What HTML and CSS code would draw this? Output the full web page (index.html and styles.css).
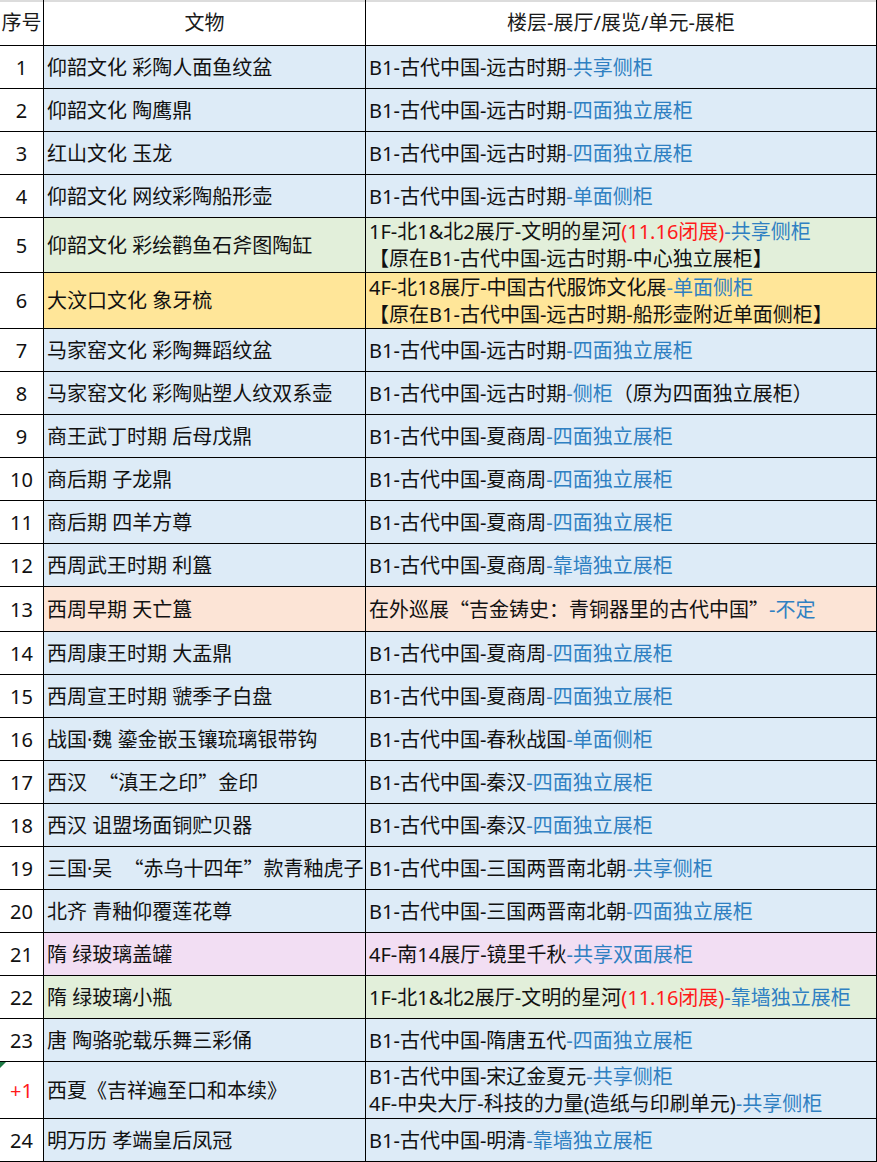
FILE: index.html
```html
<!DOCTYPE html>
<html lang="zh-CN">
<head>
<meta charset="utf-8">
<title>文物位置表</title>
<link rel="stylesheet" href="styles.css">
</head>
<body>
<div class="sheet">
  <div class="row head">
    <div class="c num">序号</div>
    <div class="c mid">文物</div>
    <div class="c mid">楼层-展厅/展览/单元-展柜</div>
  </div>

  <div class="row blue"><div class="c num">1</div><div class="c">仰韶文化 彩陶人面鱼纹盆</div><div class="c">B1-古代中国-远古时期<span class="b">-共享侧柜</span></div></div>
  <div class="row blue"><div class="c num">2</div><div class="c">仰韶文化 陶鹰鼎</div><div class="c">B1-古代中国-远古时期<span class="b">-四面独立展柜</span></div></div>
  <div class="row blue"><div class="c num">3</div><div class="c">红山文化 玉龙</div><div class="c">B1-古代中国-远古时期<span class="b">-四面独立展柜</span></div></div>
  <div class="row blue"><div class="c num">4</div><div class="c">仰韶文化 网纹彩陶船形壶</div><div class="c">B1-古代中国-远古时期<span class="b">-单面侧柜</span></div></div>
  <div class="row green h55"><div class="c num">5</div><div class="c">仰韶文化 彩绘鹳鱼石斧图陶缸</div><div class="c multi"><div>1F-北1&amp;北2展厅-文明的星河<span class="r">(11.16闭展)</span><span class="b">-共享侧柜</span></div><div>【原在B1-古代中国-远古时期-中心独立展柜】</div></div></div>
  <div class="row gold h56"><div class="c num">6</div><div class="c">大汶口文化 象牙梳</div><div class="c multi"><div>4F-北18展厅-中国古代服饰文化展<span class="b">-单面侧柜</span></div><div>【原在B1-古代中国-远古时期-船形壶附近单面侧柜】</div></div></div>
  <div class="row blue"><div class="c num">7</div><div class="c">马家窑文化 彩陶舞蹈纹盆</div><div class="c">B1-古代中国-远古时期<span class="b">-四面独立展柜</span></div></div>
  <div class="row blue"><div class="c num">8</div><div class="c">马家窑文化 彩陶贴塑人纹双系壶</div><div class="c">B1-古代中国-远古时期<span class="b">-侧柜</span>（原为四面独立展柜）</div></div>
  <div class="row blue"><div class="c num">9</div><div class="c">商王武丁时期 后母戊鼎</div><div class="c">B1-古代中国-夏商周<span class="b">-四面独立展柜</span></div></div>
  <div class="row blue"><div class="c num">10</div><div class="c">商后期 子龙鼎</div><div class="c">B1-古代中国-夏商周<span class="b">-四面独立展柜</span></div></div>
  <div class="row blue"><div class="c num">11</div><div class="c">商后期 四羊方尊</div><div class="c">B1-古代中国-夏商周<span class="b">-四面独立展柜</span></div></div>
  <div class="row blue"><div class="c num">12</div><div class="c">西周武王时期 利簋</div><div class="c">B1-古代中国-夏商周<span class="b">-靠墙独立展柜</span></div></div>
  <div class="row peach h45"><div class="c num">13</div><div class="c">西周早期 天亡簋</div><div class="c">在外巡展<span class="q">“</span>吉金铸史：青铜器里的古代中国<span class="q">”</span><span class="b">-不定</span></div></div>
  <div class="row blue"><div class="c num">14</div><div class="c">西周康王时期 大盂鼎</div><div class="c">B1-古代中国-夏商周<span class="b">-四面独立展柜</span></div></div>
  <div class="row blue"><div class="c num">15</div><div class="c">西周宣王时期 虢季子白盘</div><div class="c">B1-古代中国-夏商周<span class="b">-四面独立展柜</span></div></div>
  <div class="row blue"><div class="c num">16</div><div class="c">战国·魏 鎏金嵌玉镶琉璃银带钩</div><div class="c">B1-古代中国-春秋战国<span class="b">-单面侧柜</span></div></div>
  <div class="row blue"><div class="c num">17</div><div class="c">西汉 <span class="q open">“</span>滇王之印<span class="q">”</span>金印</div><div class="c">B1-古代中国-秦汉<span class="b">-四面独立展柜</span></div></div>
  <div class="row blue"><div class="c num">18</div><div class="c">西汉 诅盟场面铜贮贝器</div><div class="c">B1-古代中国-秦汉<span class="b">-四面独立展柜</span></div></div>
  <div class="row blue"><div class="c num">19</div><div class="c">三国·吴 <span class="q open">“</span>赤乌十四年<span class="q">”</span>款青釉虎子</div><div class="c">B1-古代中国-三国两晋南北朝<span class="b">-共享侧柜</span></div></div>
  <div class="row blue"><div class="c num">20</div><div class="c">北齐 青釉仰覆莲花尊</div><div class="c">B1-古代中国-三国两晋南北朝<span class="b">-四面独立展柜</span></div></div>
  <div class="row pink"><div class="c num">21</div><div class="c">隋 绿玻璃盖罐</div><div class="c">4F-南14展厅-镜里千秋<span class="b">-共享双面展柜</span></div></div>
  <div class="row green"><div class="c num">22</div><div class="c">隋 绿玻璃小瓶</div><div class="c">1F-北1&amp;北2展厅-文明的星河<span class="r">(11.16闭展)</span><span class="b">-靠墙独立展柜</span></div></div>
  <div class="row blue"><div class="c num">23</div><div class="c">唐 陶骆驼载乐舞三彩俑</div><div class="c">B1-古代中国-隋唐五代<span class="b">-四面独立展柜</span></div></div>
  <div class="row blue h57"><div class="c num flag"><span class="r">+1</span></div><div class="c">西夏《吉祥遍至口和本续》</div><div class="c multi"><div>B1-古代中国-宋辽金夏元<span class="b">-共享侧柜</span></div><div>4F-中央大厅-科技的力量(造纸与印刷单元)<span class="b">-共享侧柜</span></div></div></div>
  <div class="row blue"><div class="c num">24</div><div class="c">明万历 孝端皇后凤冠</div><div class="c">B1-古代中国-明清<span class="b">-靠墙独立展柜</span></div></div>
</div>
</body>
</html>
```

FILE: styles.css
```css
html, body {
  margin: 0;
  padding: 0;
  background: #ffffff;
}
body {
  width: 877px;
  height: 1162px;
  overflow: hidden;
  font-family: "Noto Sans", "Noto Sans CJK SC", sans-serif;
  font-size: 20px;
  line-height: 29px;
  color: #111111;
}
.sheet {
  display: flex;
  flex-direction: column;
  width: 877px;
}
.row {
  display: grid;
  grid-template-columns: 44px 322px 511px;
  height: 43px;
}
.row.head { height: 46px; }
.row.h45 { height: 45px; }
.row.h55 { height: 55px; }
.row.h56 { height: 56px; }
.row.h57 { height: 57px; }

.c {
  box-sizing: border-box;
  display: flex;
  align-items: center;
  padding: 0 3px;
  border-right: 1px solid #000000;
  border-bottom: 1px solid #000000;
  white-space: pre;
  min-width: 0;
}
.c.num {
  justify-content: center;
  padding: 0;
  background: #ffffff;
}
.c.mid { justify-content: center; }
.head .c {
  background: #ffffff;
  box-shadow: inset 0 2px 0 #dcdcdc;
  color: #1a1a1a;
}
.c.multi {
  flex-direction: column;
  align-items: flex-start;
  justify-content: center;
  line-height: 27px;
}
.q { font-family: "Noto Sans CJK SC", sans-serif; }
.q.open { margin-left: 6px; }

.blue .c:not(.num) { background: #ddebf7; }
.green .c:not(.num) { background: #e2efda; }
.gold .c:not(.num) { background: #ffe699; }
.peach .c:not(.num) { background: #fce4d6; }
.pink .c:not(.num) { background: #f2def3; }

.b { color: #2f80c2; }
.r { color: #ff1a1a; }

.flag { position: relative; }
.flag::before {
  content: "";
  position: absolute;
  top: 0;
  left: 0;
  border-top: 6px solid #1e7a45;
  border-right: 6px solid transparent;
}
```
